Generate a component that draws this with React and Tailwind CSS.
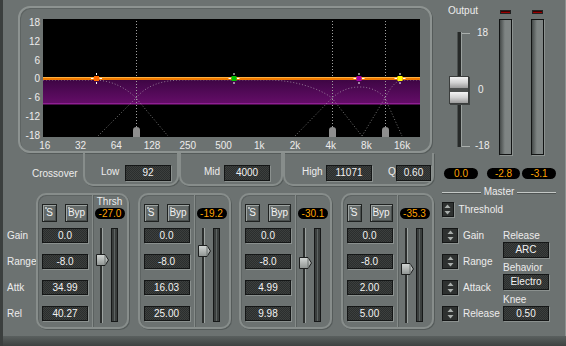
import React from 'react';

const FREQS = ['16', '32', '64', '128', '250', '500', '1k', '2k', '4k', '8k', '16k'];
const DB = ['18', '12', '6', '0', '- 6', '-12', '-18'];
const ROWS = ['Gain', 'Range', 'Attk', 'Rel'];

const BANDS = [
    { thr: '-27.0', vals: ['0.0', '-8.0', '34.99', '40.27'], knob: 26, label: true },
    { thr: '-19.2', vals: ['0.0', '-8.0', '16.03', '25.00'], knob: 17 },
    { thr: '-30.1', vals: ['0.0', '-8.0', '4.99', '9.98'], knob: 29 },
    { thr: '-35.3', vals: ['0.0', '-8.0', '2.00', '5.00'], knob: 35 },
];

const MARKERS = [
    [53.5, '#ff6a00'],
    [191, '#00c000'],
    [316, '#a000a8'],
    [357, '#ffff00'],
];
const XOVERS = [93, 289, 342];

const ValueBox = ({ children, size = 'w-[46px] h-[15px]' }) => (
    <div className={`${size} flex items-center justify-center border border-[#141616] bg-[#323534] bg-[image:repeating-conic-gradient(#3c3f3e_0_25%,#2b2e2d_0_50%)] bg-[length:2px_2px] shadow-[1px_1px_0_#8b918f] text-[10px] leading-none text-[#f2f2f2]`}>
        {children}
    </div>
);

const Readout = ({ children, size }) => (
    <div className={`${size} h-[11px] rounded-full bg-black flex items-center justify-center text-[10px] leading-none text-[#ffa300]`}>
        {children}
    </div>
);

const SmallButton = ({ children, size }) => (
    <div className={`${size} h-[18px] relative flex items-center justify-center bg-[#646a69] border border-[#1f2221] shadow-[inset_1px_1px_0_#9da3a1,inset_-1px_-1px_0_#4a4f4e] text-[10px] leading-none text-[#f2f2f2]`}>
        <span className="absolute left-[2px] top-[2px] w-[2px] h-[2px] bg-[#b8bdbb]" />
        {children}
    </div>
);

const Spinner = () => (
    <div className="w-[16px] h-[15px] flex items-center justify-center bg-[#2e3130] border border-[#141616] shadow-[1px_1px_0_#8b918f]">
        <svg width="7" height="11" viewBox="0 0 7 11">
            <polygon points="3.5,0.5 6.5,4 0.5,4" fill="#a9aeac" />
            <polygon points="0.5,7 6.5,7 3.5,10.5" fill="#a9aeac" />
        </svg>
    </div>
);

function Graph() {
    return (
        <svg width="377" height="118" viewBox="0 0 377 118" className="block bg-black">
            <defs>
                <linearGradient id="purple" x1="0" y1="0" x2="0" y2="1">
                    <stop offset="0" stopColor="#3e0644" />
                    <stop offset="1" stopColor="#650d69" />
                </linearGradient>
            </defs>
            <rect x="0" y="61" width="377" height="24" fill="url(#purple)" />
            <rect x="0" y="84" width="377" height="1.5" fill="#8f1f92" />
            {XOVERS.map((x) => (
                <line key={x} x1={x + 0.5} y1="2" x2={x + 0.5} y2="108" stroke="#a0a0a0" strokeDasharray="1 2" />
            ))}
            <g fill="none" stroke="#d0d0d0" strokeOpacity="0.55" strokeDasharray="1 2">
                <path d="M0 61 L50 61 C70 61 84 70 93 79 L125 117" />
                <path d="M55 117 L93 79 C103 67 118 61 140 61 L225 61 C250 61 276 69 289 79 L319 117" />
                <path d="M252 117 L289 79 C298 71 307 68 317 68 C327 68 336 72 342 79 L359 117" />
                <path d="M319 117 L342 79 C348 68 352 62 360 61 L377 61" />
            </g>
            <rect x="0" y="58" width="377" height="3" fill="#f07a00" />
            <rect x="0" y="58" width="377" height="1" fill="#ffb040" />
            {XOVERS.map((x) => (
                <path
                    key={`h${x}`}
                    d={`M${x - 3} 118 V111 Q${x - 3} 108 ${x + 0.5} 108 Q${x + 4} 108 ${x + 4} 111 V118 Z`}
                    fill="#8e8e8e"
                />
            ))}
            {MARKERS.map(([x, c]) => (
                <g key={c}>
                    <rect x={x - 2.5} y="57" width="5" height="5" fill={c} />
                    <g fill="#ffffff">
                        <rect x={x - 0.5} y="54" width="1" height="2" />
                        <rect x={x - 0.5} y="63" width="1" height="2" />
                        <rect x={x - 5.5} y="59" width="2.5" height="1" />
                        <rect x={x + 3} y="59" width="2.5" height="1" />
                    </g>
                </g>
            ))}
        </svg>
    );
}

function EqPanel() {
    return (
        <div className="ml-[15px] mt-[6px] w-[414px] h-[147px] rounded-[12px] border-2 border-[#8d9391] shadow-[1px_1px_0_#555b5a,inset_1px_1px_0_#5d6362] flex flex-col">
            <div className="flex items-start pt-[11px]">
                <div className="w-[23px] h-[123px] -mt-[1px] pr-[3px] flex flex-col justify-between items-end">
                    {DB.map((d) => (
                        <span key={d} className="h-[10px] leading-[10px] text-[10px] text-[#ececec] whitespace-pre">
                            {d}
                        </span>
                    ))}
                </div>
                <Graph />
            </div>
            <div className="ml-[7px] w-[393px] h-[14px] grid grid-cols-11 items-center">
                {FREQS.map((f) => (
                    <span key={f} className="text-center text-[10px] leading-none text-[#ececec]">
                        {f}
                    </span>
                ))}
            </div>
        </div>
    );
}

const Group = ({ size, children }) => (
    <div className={`${size} h-[33px] flex items-end pb-[3px] rounded-b-[10px] border-2 border-t-0 border-[#878d8b] shadow-[1px_1px_0_#555b5a]`}>
        {children}
    </div>
);

function CrossoverRow() {
    const label = 'text-[10px] leading-none text-[#ececec]';
    return (
        <div className="h-[40px] flex items-start pl-[29px]">
            <div className={`w-[51px] h-[33px] flex items-end pb-[7px] ${label}`}>Crossover</div>
            <Group size="w-[96px]">
                <span className={`ml-[16px] w-[24px] mb-[4px] ${label}`}>Low</span>
                <ValueBox size="w-[46px] h-[16px]">92</ValueBox>
            </Group>
            <Group size="w-[104px]">
                <span className={`ml-[23px] w-[20px] mb-[4px] ${label}`}>Mid</span>
                <ValueBox size="w-[46px] h-[16px]">4000</ValueBox>
            </Group>
            <Group size="w-[151px]">
                <span className={`ml-[17px] w-[24px] mb-[4px] ${label}`}>High</span>
                <ValueBox size="w-[46px] h-[16px]">11071</ValueBox>
                <span className={`ml-[16px] w-[8px] mb-[4px] ${label}`}>Q</span>
                <ValueBox size="w-[35px] h-[16px]">0.60</ValueBox>
            </Group>
        </div>
    );
}

function Band({ band }) {
    return (
        <div className="w-[93px] h-[136px] rounded-[10px] border-2 border-[#878d8b] shadow-[1px_1px_0_#555b5a,inset_1px_1px_0_#5d6362] flex">
            <div className="w-[54px] pl-[4px] pt-[9px] flex flex-col">
                <div className="flex gap-[8px]">
                    <SmallButton size="w-[15px]">S</SmallButton>
                    <SmallButton size="w-[23px]">Byp</SmallButton>
                </div>
                <div className="mt-[6px] flex flex-col gap-[11px]">
                    {band.vals.map((v, i) => (
                        <ValueBox key={i}>{v}</ValueBox>
                    ))}
                </div>
            </div>
            <div className="w-[34px] border-l border-[#868c8a] shadow-[inset_1px_0_0_#5b6160] flex flex-col">
                <div className="h-[11px] mt-[1px] text-center text-[10px] leading-[11px] text-[#ececec]">
                    {band.label ? 'Thrsh' : ''}
                </div>
                <div className="mt-[1px] ml-[2px]">
                    <Readout size="w-[30px]">{band.thr}</Readout>
                </div>
                <div className="relative mt-[9px] h-[95px] flex">
                    <div className="ml-[7px] w-[2px] h-full bg-[#2b2e2d] shadow-[1px_0_0_#9ca2a0]" />
                    <div className="ml-[9px] w-[7px] h-[94px] border border-[#161818] bg-[#3a3e3d] flex justify-center">
                        <div className="w-[1px] h-full bg-[#5d6362]" />
                    </div>
                    <svg
                        width="13"
                        height="12"
                        viewBox="0 0 13 12"
                        className="absolute left-[3px]"
                        style={{ top: band.knob }}
                    >
                        <defs>
                            <linearGradient id="knob" x1="0" y1="0" x2="0" y2="1">
                                <stop offset="0" stopColor="#d4d8d6" />
                                <stop offset="1" stopColor="#8e9391" />
                            </linearGradient>
                        </defs>
                        <polygon points="0.5,0.5 9,0.5 12.5,6 9,11.5 0.5,11.5" fill="url(#knob)" stroke="#1d1f1f" />
                        <line x1="9" y1="1" x2="9" y2="11" stroke="#6d7371" />
                    </svg>
                </div>
            </div>
        </div>
    );
}

function Meter() {
    return (
        <div className="w-[13px] flex flex-col items-center">
            <div className="mt-[10px] w-[11px] h-[4px] bg-[#3a0000] border border-[#222] flex items-center">
                <div className="w-full h-[1px] bg-[#9a0000]" />
            </div>
            <div className="mt-[5px] w-[13px] h-[136px] border border-[#111313] bg-[linear-gradient(to_right,#464b4a,#7e8483_45%,#7e8483)] shadow-[1px_1px_0_#8b918f]" />
        </div>
    );
}

function OutputSection() {
    const label = 'text-[10px] leading-[10px] text-[#ececec]';
    return (
        <div className="h-[160px] flex items-start">
            <div className="w-[57px] flex flex-col">
                <div className={`mt-[5px] h-[12px] pl-[11px] ${label} leading-[12px]`}>Output</div>
                <div className="relative mt-[15px] ml-[20px] h-[115px] flex items-start">
                    <div className="w-[5px] h-full bg-[#262928] border-l border-[#4b504f] border-r border-r-[#9aa09e]" />
                    <div className="-mt-[4px] h-[123px] flex flex-col justify-between">
                        <div className="h-[10px] flex items-center">
                            <div className="w-[8px] h-px bg-[#a9aeac]" />
                            <span className={`ml-[7px] ${label}`}>18</span>
                        </div>
                        <div className="h-[10px] flex items-center pl-[16px]">
                            <span className={label}>0</span>
                        </div>
                        <div className="h-[10px] flex items-center">
                            <div className="w-[8px] h-px bg-[#a9aeac]" />
                            <span className={`ml-[5px] ${label}`}>-18</span>
                        </div>
                    </div>
                    <div className="absolute left-[-8px] top-[44px] w-[20px] h-[28px] flex flex-col border border-[#3a3d3c] shadow-[1px_1px_0_#3f4342]">
                        <div className="h-[11px] bg-[linear-gradient(#f4f4f4,#d2d2d2_50%,#9a9a9a)]" />
                        <div className="h-[4px] bg-[#4a4d4c]" />
                        <div className="flex-1 bg-[linear-gradient(#f4f4f4,#d2d2d2_50%,#9a9a9a)]" />
                    </div>
                </div>
            </div>
            <div className="ml-[5px]">
                <Meter />
            </div>
            <div className="ml-[19px]">
                <Meter />
            </div>
        </div>
    );
}

function MasterSection() {
    const label = 'text-[10px] leading-none text-[#ececec] whitespace-nowrap';
    const rows = ['Threshold', 'Gain', 'Range', 'Attack', 'Release'];
    return (
        <div className="flex flex-col">
            <div className="mt-[8px] flex items-center">
                <Readout size="ml-[7px] w-[34px]">0.0</Readout>
                <Readout size="ml-[9px] w-[33px]">-2.8</Readout>
                <Readout size="ml-[2px] w-[34px]">-3.1</Readout>
            </div>
            <div className="mt-[7px] h-[12px] ml-[5px] w-[114px] flex items-center gap-[3px]">
                <div className="flex-1 h-px bg-[#c4c8c6] shadow-[0_1px_0_#4d5251]" />
                <span className={label}>Master</span>
                <div className="flex-1 h-px bg-[#c4c8c6] shadow-[0_1px_0_#4d5251]" />
            </div>
            <div className="mt-[4px] flex items-start">
                <div className="ml-[5px] w-[61px] flex flex-col gap-[11px]">
                    {rows.map((r) => (
                        <div key={r} className="flex items-center gap-[5px]">
                            <Spinner />
                            <span className={label}>{r}</span>
                        </div>
                    ))}
                </div>
                <div className="mt-[28px] flex flex-col">
                    <div className={`h-[12px] flex items-center ${label}`}>Release</div>
                    <ValueBox size="w-[46px] h-[16px]">ARC</ValueBox>
                    <div className={`h-[12px] mt-[4px] flex items-center ${label}`}>Behavior</div>
                    <ValueBox size="w-[46px] h-[16px]">Electro</ValueBox>
                    <div className={`h-[12px] mt-[4px] flex items-center ${label}`}>Knee</div>
                    <ValueBox size="w-[46px] h-[15px]">0.50</ValueBox>
                </div>
            </div>
        </div>
    );
}

export default function App() {
    return (
        <div className="w-[566px] h-[346px] overflow-hidden flex flex-col bg-[#6c7271] border-l-[3px] border-[#3b3f3e] font-['Liberation_Sans',Arial,sans-serif]">
            <div className="h-[336px] flex">
                <div className="w-[434px] flex flex-col">
                    <EqPanel />
                    <CrossoverRow />
                    <div className="flex items-start">
                        <div className="ml-[4px] w-[29px] mt-[35px] flex flex-col gap-[11px]">
                            {ROWS.map((r) => (
                                <div key={r} className="h-[15px] flex items-center text-[10px] leading-none text-[#ececec]">
                                    {r}
                                </div>
                            ))}
                        </div>
                        <div className="flex gap-[8.5px]">
                            {BANDS.map((b, i) => (
                                <Band key={i} band={b} />
                            ))}
                        </div>
                    </div>
                </div>
                <div className="flex-1 flex flex-col border-r border-[#8b918f]">
                    <OutputSection />
                    <MasterSection />
                </div>
            </div>
            <div className="flex-1 bg-[linear-gradient(#5a605f,#3e4241)]" />
        </div>
    );
}
